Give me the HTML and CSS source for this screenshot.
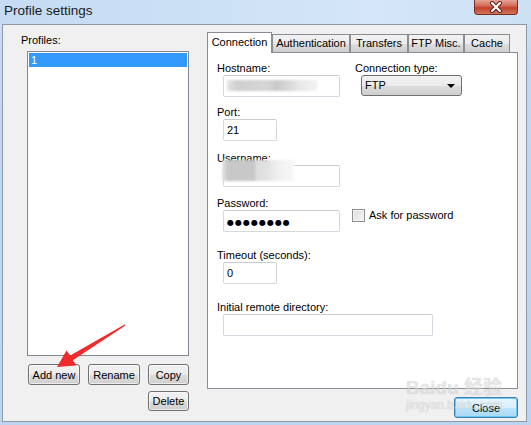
FILE: index.html
```html
<!DOCTYPE html>
<html lang="en">
<head>
    <meta charset="UTF-8">
    <title>Profile settings</title>
    <link rel="stylesheet" href="styles.css">
</head>
<body>

<div class="window">
    <div class="titlebar">
        <span class="title">Profile settings</span>
        <div class="close-x">
            <svg width="16" height="12" viewBox="0 0 16 12">
                <path d="M4 2 L12 10 M12 2 L4 10" stroke="#5a1d14" stroke-width="4" stroke-linecap="round"/>
                <path d="M4 2 L12 10 M12 2 L4 10" stroke="#fff" stroke-width="2.2" stroke-linecap="round"/>
            </svg>
        </div>
    </div>

    <div class="client">
        <div class="profiles">
            <div class="lbl">Profiles:</div>
            <div class="listbox">
                <div class="list-item selected">1</div>
            </div>
            <div class="profile-buttons">
                <button class="btn">Add new</button>
                <button class="btn">Rename</button>
                <button class="btn">Copy</button>
                <button class="btn btn-delete">Delete</button>
            </div>
        </div>

        <div class="settings">
            <div class="tabs">
                <div class="tab active tab-conn">Connection</div>
                <div class="tab tab-auth">Authentication</div>
                <div class="tab tab-trans">Transfers</div>
                <div class="tab tab-ftp">FTP Misc.</div>
                <div class="tab tab-cache">Cache</div>
            </div>

            <div class="panel">
                <div class="row">
                    <div class="field field-host">
                        <div class="lbl">Hostname:</div>
                        <div class="edit edit-wide"><div class="blur blur-host"></div></div>
                    </div>
                    <div class="field">
                        <div class="lbl">Connection type:</div>
                        <div class="combo">FTP<span class="combo-arrow"></span></div>
                    </div>
                </div>

                <div class="row row-port">
                    <div class="field">
                        <div class="lbl">Port:</div>
                        <div class="edit edit-small">21</div>
                    </div>
                </div>

                <div class="row row-user">
                    <div class="field">
                        <div class="lbl">Username:</div>
                        <div class="edit edit-wide"></div>
                        <div class="blur blur-user"></div>
                    </div>
                </div>

                <div class="row row-pass">
                    <div class="field">
                        <div class="lbl">Password:</div>
                        <div class="edit edit-wide"><span class="dots">●●●●●●●●</span></div>
                    </div>
                    <div class="check">
                        <span class="check-box"></span>
                        <span>Ask for password</span>
                    </div>
                </div>

                <div class="row row-timeout">
                    <div class="field">
                        <div class="lbl">Timeout (seconds):</div>
                        <div class="edit edit-small">0</div>
                    </div>
                </div>

                <div class="row row-dir">
                    <div class="field">
                        <div class="lbl">Initial remote directory:</div>
                        <div class="edit edit-dir"></div>
                    </div>
                </div>
            </div>

            <div class="footer">
                <button class="btn btn-default">Close</button>
            </div>
        </div>
    </div>
</div>

<svg class="arrow" width="531" height="425" viewBox="0 0 531 425">
    <polygon points="57,367 66.5,350.5 70.2,355.6 124.6,324.4 125.4,325.6 72.8,360.2 76.4,365.6" fill="#ef2b2b"/>
</svg>

<div class="watermark">
    <div class="wm-logo">Bai<span class="wm-paw">du</span> 经验</div>
    <div class="wm-url">jingyan.baidu.com</div>
</div>

</body>
</html>
```

FILE: styles.css
```css
body {
    margin: 0;
    width: 531px;
    height: 425px;
    overflow: hidden;
    position: relative;
    font-family: "Liberation Sans", Arial, sans-serif;
    font-size: 11px;
    color: #000;
    background: linear-gradient(to bottom, #cfe2f6, #c3d9f1 60px, #bcd4ee);
}

.window {
    height: 425px;
    display: flex;
    flex-direction: column;
}

.titlebar {
    height: 24px;
    position: relative;
    background: linear-gradient(to right, #c4dbf3, #d4e6f8 70%, #cde1f5);
}

.title {
    display: block;
    padding: 2px 0 0 4px;
    font-size: 13.5px;
    line-height: 17px;
    color: #1a1a1a;
}

.close-x {
    position: absolute;
    top: 0;
    left: 474px;
    width: 44px;
    height: 15px;
    box-sizing: border-box;
    border: 1px solid #7a2f22;
    border-top: none;
    border-radius: 0 0 4px 4px;
    background: linear-gradient(to bottom, #e6a596, #d06550 45%, #c0422a 55%, #d2745e);
    display: flex;
    justify-content: center;
    align-items: center;
}

.client {
    flex: 1;
    margin: 0 4px 3px 2px;
    border: 1px solid #8d99a8;
    background: #f0f0f0;
    display: flex;
}

.lbl {
    line-height: 14px;
    height: 14px;
    white-space: nowrap;
}

/* profiles column */

.profiles {
    width: 168px;
    padding: 8px 0 0 18px;
}

.listbox {
    margin: 4px 0 0 6px;
    width: 162px;
    height: 305px;
    box-sizing: border-box;
    border: 1px solid #828790;
    background: #fff;
    padding: 1px;
}

.list-item {
    height: 14px;
    line-height: 14px;
    padding-left: 2px;
}

.list-item.selected {
    background: #3399ff;
    color: #fff;
}

.profile-buttons {
    margin: 8px 0 0 7px;
    display: grid;
    grid-template-columns: 52px 52px 41px;
    grid-template-rows: 21px 20px;
    column-gap: 8px;
    row-gap: 6px;
}

.btn {
    font-family: "Liberation Sans", Arial, sans-serif;
    font-size: 11px;
    color: #000;
    padding: 0;
    box-sizing: border-box;
    border: 1px solid #707070;
    border-radius: 3px;
    background: linear-gradient(to bottom, #f2f2f2, #ebebeb 50%, #dddddd 51%, #cfcfcf);
    box-shadow: inset 0 0 0 1px rgba(255, 255, 255, 0.6);
}

.btn-delete {
    grid-column: 3;
    grid-row: 2;
}

.btn-default {
    width: 64px;
    height: 21px;
    border-color: #3c7fb1;
    background: linear-gradient(to bottom, #eaf6fd, #d9f0fc 50%, #bee6fd 51%, #a7d9f5);
    box-shadow: inset 0 0 0 1px #6fc6f0;
}

/* settings column */

.settings {
    width: 311px;
    margin-left: 18px;
    padding-top: 7px;
}

.tabs {
    display: flex;
    align-items: flex-end;
    height: 20px;
    position: relative;
    z-index: 1;
}

.tab {
    height: 18px;
    box-sizing: border-box;
    border: 1px solid #898c95;
    border-bottom: none;
    background: linear-gradient(to bottom, #f2f2f2, #ebebeb 50%, #dddddd 51%, #cfcfcf);
    text-align: center;
    line-height: 17px;
    white-space: nowrap;
}

.tab.active {
    height: 21px;
    margin-bottom: -1px;
    background: #fff;
    line-height: 19px;
}

.tab-conn { width: 65px; }
.tab-auth { width: 78px; }
.tab-trans { width: 58px; }
.tab-ftp { width: 56px; }
.tab-cache { width: 46px; }

.panel {
    height: 337px;
    box-sizing: border-box;
    border: 1px solid #898c95;
    background: #fff;
    padding: 8px 0 0 9px;
}

.row {
    display: flex;
}

.row-port { margin-top: 8px; }
.row-user { margin-top: 10px; }
.row-pass { margin-top: 9px; }
.row-timeout { margin-top: 16px; }
.row-dir { margin-top: 16px; }

.field {
    position: relative;
}

.field-host {
    width: 138px;
}

.edit {
    margin-left: 6px;
    height: 22px;
    box-sizing: border-box;
    border: 1px solid #d5d9df;
    border-top-color: #c9ccd1;
    border-radius: 2px;
    background: #fff;
    padding: 0 3px;
    line-height: 20px;
    position: relative;
}

.edit-wide { width: 117px; }
.edit-small { width: 54px; }
.edit-dir { width: 210px; }

.dots {
    font-family: "DejaVu Sans", sans-serif;
    font-size: 8px;
    letter-spacing: 1px;
}

.blur {
    position: absolute;
    filter: blur(1px);
}

.blur-host {
    left: 3px;
    top: 4px;
    width: 90px;
    height: 11px;
    background: linear-gradient(to right, #e4e4e4, #cfcfcf 12%, #d6d6d6 45%, #c9c9c9 55%, #dcdcdc 72%, #e8e8e8 80%, #f2f2f2);
}

.blur-user {
    left: 5px;
    top: 9px;
    width: 72px;
    height: 21px;
    background: linear-gradient(to right, #e6e6e6, #c8c8c8 8%, #c8c8c8 45%, #dedede 48%, #e2e2e2 62%, #f0f0f0 78%, #f8f8f8);
}

.combo {
    margin-left: 6px;
    width: 101px;
    height: 21px;
    box-sizing: border-box;
    border: 1px solid #707070;
    border-radius: 3px;
    background: linear-gradient(to bottom, #f2f2f2, #ebebeb 50%, #dddddd 51%, #cfcfcf);
    padding-left: 3px;
    line-height: 19px;
    position: relative;
}

.combo-arrow {
    position: absolute;
    right: 6px;
    top: 8px;
    border-left: 4px solid transparent;
    border-right: 4px solid transparent;
    border-top: 4px solid #000;
}

.check {
    margin: 13px 0 0 12px;
    display: flex;
    align-items: center;
    height: 13px;
    line-height: 13px;
    gap: 4px;
}

.check-box {
    width: 13px;
    height: 13px;
    box-sizing: border-box;
    border: 1px solid #8f8f8f;
    background: linear-gradient(135deg, #dcdcdc, #f7f7f7);
    box-shadow: inset 0 0 0 1px #f4f4f4;
}

.footer {
    margin-top: 8px;
    display: flex;
    justify-content: flex-end;
}

/* overlays */

.arrow {
    position: absolute;
    left: 0;
    top: 0;
    pointer-events: none;
}

.watermark {
    position: absolute;
    left: 406px;
    top: 378px;
    color: rgba(255, 255, 255, 0.5);
    text-shadow: 0 0 1px rgba(0, 0, 0, 0.22);
    pointer-events: none;
    font-family: "Liberation Sans", "Noto Sans CJK SC", sans-serif;
}

.wm-logo {
    font-size: 19px;
    font-weight: bold;
    line-height: 20px;
}

.wm-url {
    font-size: 12px;
    line-height: 14px;
}
```
